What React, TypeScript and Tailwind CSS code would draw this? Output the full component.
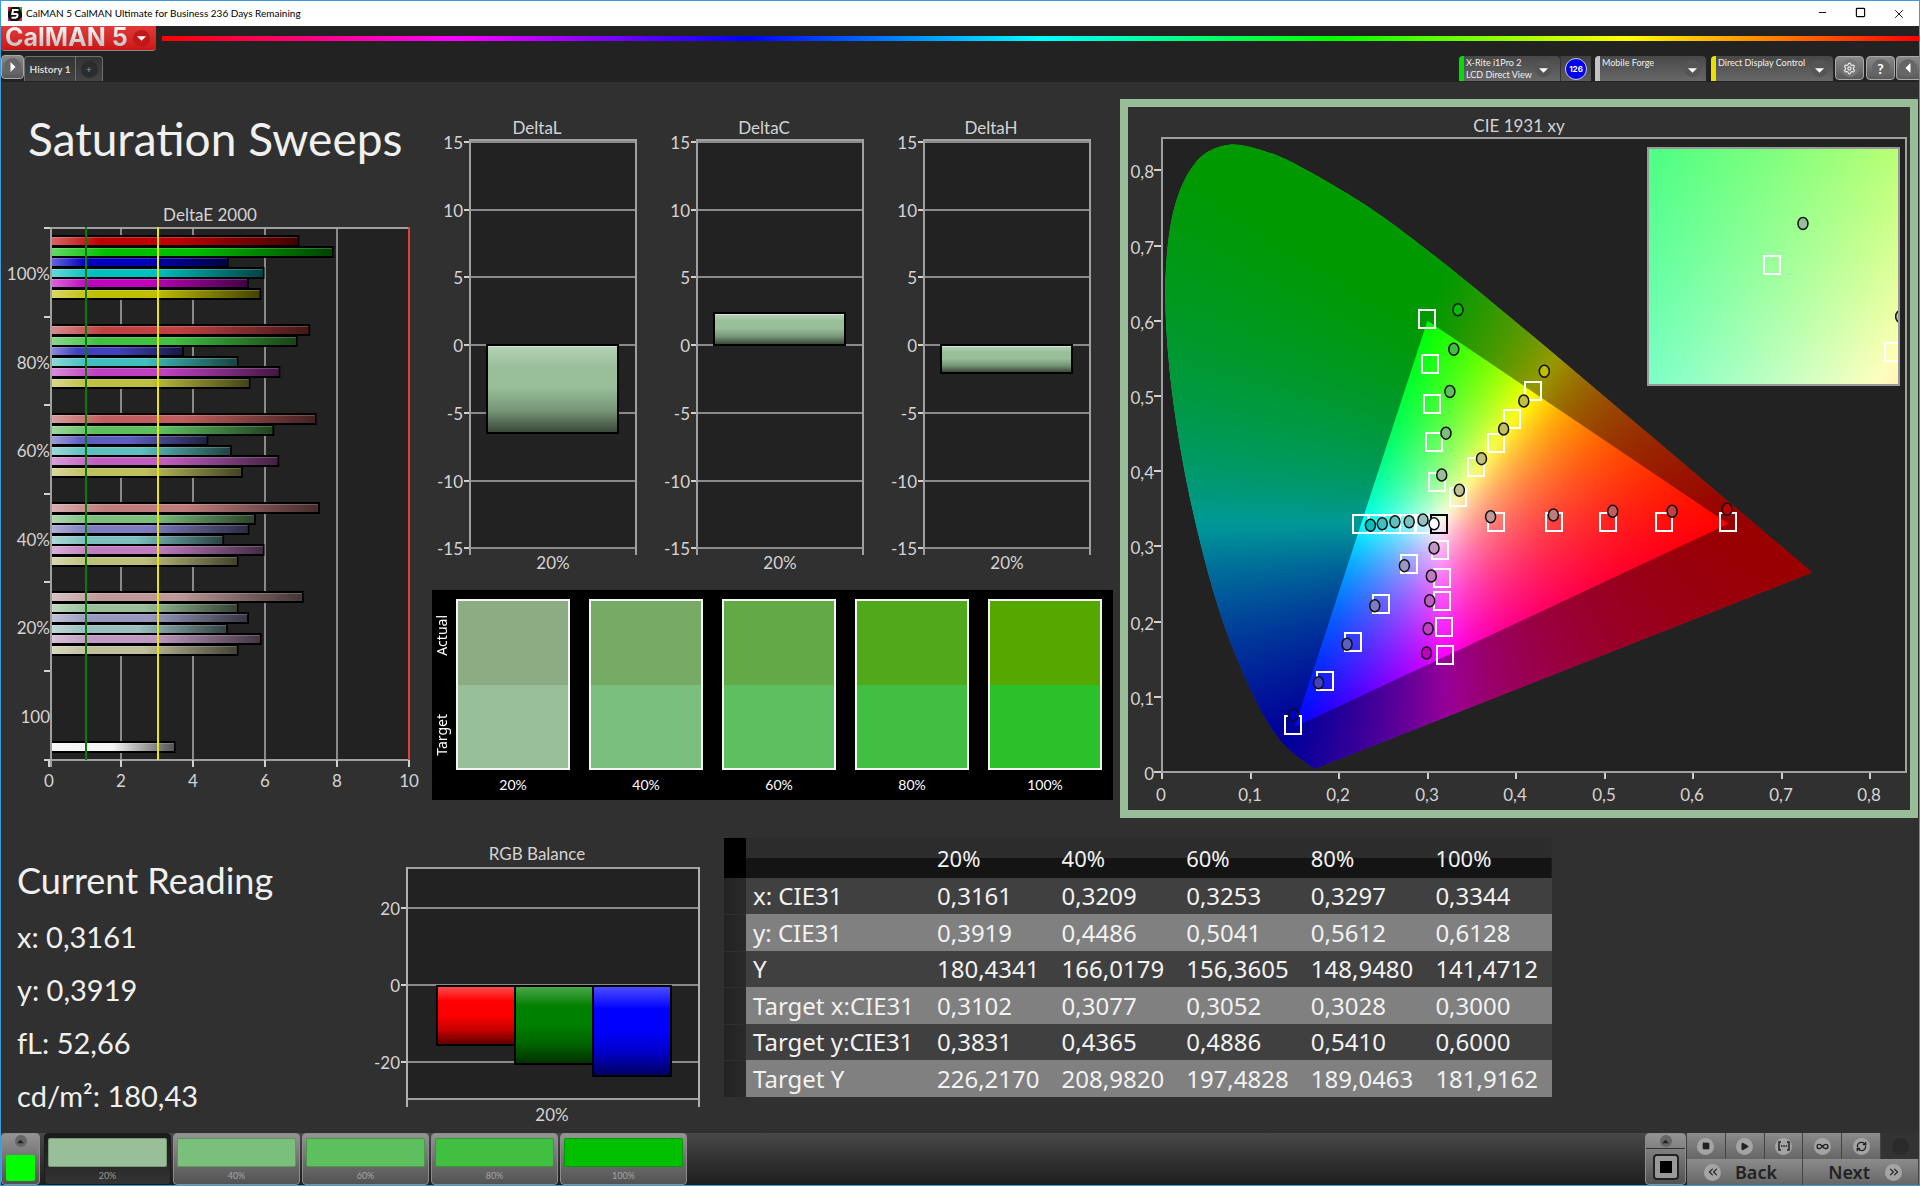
import type { ReactNode } from 'react';
import {
  ChevronsLeft,
  ChevronsRight,
  Infinity as InfinityIcon,
  Minus,
  Play,
  RefreshCw,
  Settings,
  Square,
  X,
} from 'lucide-react';

type Point = [number, number];
type Rgb = [number, number, number];

const levels = ['20%', '40%', '60%', '80%', '100%'];
const targetColors = ['#98bf98', '#7abf7a', '#5ebf5e', '#41bf41', '#00c000'];

// channel value left in the "off" channels, from 100% to 20% saturation
const desaturation = [0, 65, 94, 124, 153];

const hues: Record<string, Rgb> = {
  red: [1, 0, 0],
  green: [0, 1, 0],
  blue: [0, 0, 1],
  cyan: [0, 1, 1],
  magenta: [1, 0, 1],
  yellow: [1, 1, 0],
};

function hueColor(hue: string, step: number) {
  const [r, g, b] = hues[hue].map((on) => (on ? 191 : desaturation[step]));
  return `rgb(${r},${g},${b})`;
}

/* ---------- shared chart pieces ---------- */

interface LabelProps {
  x: number;
  y: number;
  anchor?: 'start' | 'middle' | 'end';
  children: ReactNode;
}

function Label({ x, y, anchor = 'middle', children }: LabelProps) {
  return (
    <text x={x} y={y + 7} textAnchor={anchor} className="fill-[#d4d4d4] text-[17px]">
      {children}
    </text>
  );
}

function BarShades() {
  return (
    <defs>
      <linearGradient id="shadeRight">
        <stop offset="0" stopColor="#fff" stopOpacity="0.4" />
        <stop offset="0.2" stopColor="#fff" stopOpacity="0" />
        <stop offset="0.5" stopColor="#000" stopOpacity="0" />
        <stop offset="1" stopColor="#000" stopOpacity="0.65" />
      </linearGradient>
      <linearGradient id="shadeDown" x2="0" y2="1">
        <stop offset="0" stopColor="#fff" stopOpacity="0.3" />
        <stop offset="0.25" stopColor="#fff" stopOpacity="0" />
        <stop offset="0.48" stopColor="#000" stopOpacity="0" />
        <stop offset="0.75" stopColor="#000" stopOpacity="0.22" />
        <stop offset="1" stopColor="#000" stopOpacity="0.62" />
      </linearGradient>
    </defs>
  );
}

/* ---------- DeltaE 2000 ---------- */

const barOrder = ['red', 'green', 'blue', 'cyan', 'magenta', 'yellow'];

const deltaE = [
  { label: '100%', values: [6.9, 7.85, 4.94, 5.93, 5.5, 5.84] },
  { label: '80%', values: [7.2, 6.85, 3.69, 5.21, 6.37, 5.54] },
  { label: '60%', values: [7.38, 6.2, 4.37, 5.02, 6.34, 5.33] },
  { label: '40%', values: [7.47, 5.69, 5.51, 4.81, 5.93, 5.21] },
  { label: '20%', values: [7.02, 5.21, 5.5, 4.91, 5.85, 5.21] },
];

function HorizontalBar({ y, value, color }: { y: number; value: number; color: string }) {
  const width = value * 36;
  return (
    <g>
      <rect x={50} y={y - 6} width={width} height={12} fill="#000" />
      <rect x={50} y={y - 4} width={width - 2} height={8} fill={color} />
      <rect x={50} y={y - 4} width={width - 2} height={8} fill="url(#shadeRight)" />
      <rect x={50} y={y - 4} width={width - 2} height={1} fill="#fff" opacity={0.2} />
    </g>
  );
}

function DeltaEChart() {
  return (
    <svg viewBox="0 0 431 615" className="block w-full" role="img" aria-label="DeltaE 2000">
      <Label x={209} y={15}>DeltaE 2000</Label>
      <rect x={50} y={29} width={358} height={531} fill="#222" />
      {[2, 4, 6, 8].map((v) => (
        <rect key={v} x={48 + v * 36 - 1} y={29} width={2} height={532} fill="#8a8a8a" />
      ))}
      {deltaE.map((group, g) =>
        group.values.map((value, i) => (
          <HorizontalBar
            key={`${group.label}-${i}`}
            y={Math.round(42 + g * 89 + i * 10.6)}
            value={value}
            color={hueColor(barOrder[i], g)}
          />
        )),
      )}
      <HorizontalBar y={548} value={3.46} color="#f4f4f4" />
      <rect x={49} y={28} width={359} height={2} fill="#a0a0a0" />
      <rect x={49} y={28} width={2} height={540} fill="#a0a0a0" />
      <rect x={49} y={560} width={359} height={2} fill="#a0a0a0" />
      <rect x={407} y={28} width={2} height={533} fill="#e04040" />
      <rect x={84} y={28} width={2} height={533} fill="#0a7a0a" />
      <rect x={156} y={28} width={2} height={533} fill="#e8e800" />
      {[0, 1, 2, 3, 4, 5, 6].map((i) => (
        <rect key={i} x={43} y={Math.round(28 + i * 88.6)} width={6} height={2} fill="#d0d0d0" />
      ))}
      {[0, 2, 4, 6, 8, 10].map((v) => (
        <g key={v}>
          <rect x={47 + v * 36} y={561} width={2} height={7} fill="#d0d0d0" />
          <Label x={48 + v * 36} y={581}>{v}</Label>
        </g>
      ))}
      {deltaE.map((group, g) => (
        <Label key={group.label} x={49} y={Math.round(74 + g * 88.6)} anchor="end">{group.label}</Label>
      ))}
      <Label x={49} y={517} anchor="end">100</Label>
    </svg>
  );
}

/* ---------- DeltaL / DeltaC / DeltaH ---------- */

function DeltaChart({ title, top, height }: { title: string; top: number; height: number }) {
  return (
    <svg viewBox="0 0 227 508" className="block w-full min-w-0" role="img" aria-label={title}>
      <Label x={105} y={45}>{title}</Label>
      <rect x={38} y={58} width={166} height={408} fill="#222" />
      {[15, 10, 5, 0, -5, -10, -15].map((v) => {
        const y = Math.round(263 - v * 13.55);
        return (
          <g key={v}>
            <rect x={32} y={y - 1} width={6} height={2} fill="#d0d0d0" />
            <rect x={38} y={y - 1} width={166} height={2} fill="#8a8a8a" />
            <Label x={31} y={y} anchor="end">{v}</Label>
          </g>
        );
      })}
      <rect x={38} y={57} width={166} height={2} fill="#a0a0a0" />
      <rect x={37} y={57} width={2} height={416} fill="#a0a0a0" />
      <rect x={203} y={57} width={2} height={416} fill="#a0a0a0" />
      <rect x={55} y={top} width={131} height={height} fill="#98bf98" stroke="#000" strokeWidth={2} />
      <rect x={56} y={top + 1} width={129} height={height - 2} fill="url(#shadeDown)" />
      <rect x={56} y={top + 1} width={129} height={1} fill="#fff" opacity={0.4} />
      <Label x={121} y={480}>20%</Label>
    </svg>
  );
}

/* ---------- Actual / Target swatches ---------- */

const swatches = [
  { actual: '#8cac84', target: '#98bf98' },
  { actual: '#77aa65', target: '#7abf7d' },
  { actual: '#62aa45', target: '#5ebf60' },
  { actual: '#50a91a', target: '#41bf42' },
  { actual: '#54a800', target: '#2ac12a' },
];

function SwatchPanel() {
  return (
    <div className="flex bg-black pt-[9px] pr-[11px] text-white">
      <div className="flex h-[171px] w-6 flex-col items-start justify-between pt-4 pr-1 pb-[14px] font-['Noto_Sans'] text-[14px] leading-5">
        <span className="rotate-180 [writing-mode:vertical-rl]">Actual</span>
        <span className="rotate-180 [writing-mode:vertical-rl]">Target</span>
      </div>
      <ul className="grid grow grid-cols-5 gap-[19px]">
        {swatches.map((s, i) => (
          <li key={levels[i]} className="text-center text-[14px] leading-[30px]">
            <div className="flex h-[171px] flex-col border-2 border-[#f4f4f4]">
              <div className="flex-1" style={{ backgroundColor: s.actual }} />
              <div className="flex-1" style={{ backgroundColor: s.target }} />
            </div>
            {levels[i]}
          </li>
        ))}
      </ul>
    </div>
  );
}

/* ---------- CIE 1931 xy ---------- */

const locus: Point[] = [
  [0.1741, 0.005], [0.1714, 0.0051], [0.1644, 0.0109], [0.1566, 0.0177], [0.144, 0.0297],
  [0.1355, 0.0399], [0.1241, 0.0578], [0.1096, 0.0868], [0.0913, 0.1327], [0.0687, 0.2007],
  [0.0454, 0.295], [0.0235, 0.4127], [0.0082, 0.5384], [0.0039, 0.6548], [0.0139, 0.7502],
  [0.0389, 0.812], [0.0743, 0.8338], [0.1142, 0.8262], [0.1547, 0.8059], [0.2296, 0.7543],
  [0.3016, 0.6923], [0.3731, 0.6245], [0.4441, 0.5547], [0.5125, 0.4866], [0.5752, 0.4242],
  [0.627, 0.3725], [0.6915, 0.3083], [0.7347, 0.2653],
];

const primaries: Point[] = [[0.64, 0.33], [0.3, 0.6], [0.15, 0.06]];

const targets: Point[] = [
  [0.299, 0.602], [0.3028, 0.543], [0.3052, 0.49], [0.3077, 0.439], [0.3102, 0.385],
  [0.4193, 0.5063], [0.396, 0.47], [0.377, 0.438], [0.355, 0.405], [0.334, 0.366],
  [0.64, 0.332], [0.567, 0.332], [0.504, 0.332], [0.443, 0.332], [0.377, 0.332],
  [0.2245, 0.33], [0.2418, 0.33], [0.2595, 0.33], [0.2776, 0.33], [0.2946, 0.33],
  [0.3199, 0.156], [0.3181, 0.1928], [0.3164, 0.2278], [0.3164, 0.258], [0.3146, 0.2957],
  [0.1484, 0.063], [0.184, 0.121], [0.2163, 0.1724], [0.248, 0.223], [0.2788, 0.277],
];

const measured: Record<string, Point[]> = {
  green: [[0.3344, 0.6148], [0.3297, 0.5622], [0.3253, 0.5061], [0.3209, 0.4506], [0.3161, 0.3949]],
  yellow: [[0.432, 0.5328], [0.4088, 0.4933], [0.386, 0.4561], [0.361, 0.4167], [0.336, 0.3746]],
  red: [[0.6385, 0.3493], [0.5764, 0.3466], [0.5093, 0.3466], [0.4423, 0.3418], [0.3713, 0.3395]],
  cyan: [[0.2355, 0.328], [0.2489, 0.3302], [0.2632, 0.3329], [0.2793, 0.3329], [0.2949, 0.3351]],
  magenta: [[0.2989, 0.1582], [0.3007, 0.1906], [0.3025, 0.2278], [0.3043, 0.2606], [0.3074, 0.2979]],
  blue: [[0.1484, 0.0762], [0.1769, 0.1188], [0.2091, 0.1698], [0.2404, 0.2212], [0.2739, 0.2744]],
};

const toX = (x: number) => 34 + x * 885;
const toY = (y: number) => 665 - y * 752;

// linear sRGB mix with the given chromaticity, scaled so the largest channel is full
function chromaticityColor(x: number, y: number) {
  const safeY = Math.max(y, 0.004);
  const bigX = x / safeY;
  const bigZ = (1 - x - safeY) / safeY;
  const linear = [
    3.2406 * bigX - 1.5372 - 0.4986 * bigZ,
    -0.9689 * bigX + 1.8758 + 0.0415 * bigZ,
    0.0557 * bigX - 0.204 + 1.057 * bigZ,
  ].map((c) => Math.max(c, 0));
  const peak = Math.max(...linear, 0.0001);
  return `rgb(${linear.map((c) => Math.round((255 * c) / peak)).join(',')})`;
}

function smoothPath(points: Point[]) {
  const p = points.map(([x, y]): Point => [toX(x), toY(y)]);
  let d = `M${p[0][0]} ${p[0][1]}`;
  for (let i = 0; i < p.length - 1; i++) {
    const before = p[Math.max(i - 1, 0)];
    const after = p[Math.min(i + 2, p.length - 1)];
    const [a, b] = [p[i], p[i + 1]];
    d += `C${a[0] + (b[0] - before[0]) / 6} ${a[1] + (b[1] - before[1]) / 6} `;
    d += `${b[0] - (after[0] - a[0]) / 6} ${b[1] - (after[1] - a[1]) / 6} ${b[0]} ${b[1]}`;
  }
  return `${d}Z`;
}

const locusPath = smoothPath(locus);
const gamutPath = `M${primaries.map(([x, y]) => `${toX(x)} ${toY(y)}`).join('L')}Z`;

function ColorField({ size }: { size: number }) {
  const cells = [];
  for (let py = 26; py < 680; py += size) {
    for (let px = 26; px < 700; px += size) {
      const x = (px + size / 2 - 34) / 885;
      const y = (665 - py - size / 2) / 752;
      // skip the empty corner right of the locus and the one below the purple line
      if (x + y > 1.04 || y < 0.42 * x - 0.1) continue;
      cells.push(
        <rect key={`${px}-${py}`} x={px} y={py} width={size + 1} height={size + 1} fill={chromaticityColor(x, y)} />,
      );
    }
  }
  return <g filter="url(#soften)">{cells}</g>;
}

const inset = { x: 520, y: 41, width: 251, height: 237 };
const insetX = (x: number) => 644 + (x - 0.3102) * 5250;
const insetY = (y: number) => 158 - (y - 0.3831) * 4716;

function Inset() {
  const cells = [];
  for (let py = inset.y - 12; py < inset.y + inset.height + 12; py += 12) {
    for (let px = inset.x - 12; px < inset.x + inset.width + 12; px += 12) {
      const x = 0.3102 + (px + 6 - 644) / 5250;
      const y = 0.3831 - (py + 6 - 158) / 4716;
      cells.push(
        <rect key={`${px}-${py}`} x={px} y={py} width={13} height={13} fill={chromaticityColor(x, y)} />,
      );
    }
  }
  return (
    <g>
      <g clipPath="url(#insetClip)">
        <g filter="url(#soften)">{cells}</g>
        <TargetMark cx={insetX(0.3102)} cy={insetY(0.3831)} />
        <TargetMark cx={insetX(0.3333)} cy={insetY(0.3646)} />
        <MeasuredMark cx={insetX(0.3161)} cy={insetY(0.3919)} color="#98bf98" />
        <MeasuredMark cx={insetX(0.3347)} cy={insetY(0.3722)} color="#bfbf98" />
      </g>
      <rect {...inset} fill="none" stroke="#999" strokeWidth={2} />
    </g>
  );
}

function TargetMark({ cx, cy, color = '#fff' }: { cx: number; cy: number; color?: string }) {
  return (
    <rect
      x={Math.round(cx - 8)}
      y={Math.round(cy - 9)}
      width={16}
      height={18}
      fill="none"
      stroke={color}
      strokeWidth={2}
    />
  );
}

function MeasuredMark({ cx, cy, color }: { cx: number; cy: number; color: string }) {
  return <ellipse cx={cx} cy={cy} rx={5} ry={6} fill={color} stroke="#111" strokeWidth={1.5} />;
}

function CieChart() {
  return (
    <div className="border-8 border-[#98bd98]">
      <svg viewBox="0 0 782 703" className="block w-full" role="img" aria-label="CIE 1931 xy">
        <defs>
          <filter id="soften" x="0" y="0" width="1" height="1" colorInterpolationFilters="sRGB">
            <feGaussianBlur stdDeviation="5" />
          </filter>
          <clipPath id="locusClip"><path d={locusPath} /></clipPath>
          <clipPath id="insetClip"><rect {...inset} /></clipPath>
        </defs>
        <Label x={391} y={18}>CIE 1931 xy</Label>
        <rect x={34} y={31} width={744} height={634} fill="#222" stroke="#a0a0a0" strokeWidth={2} />
        <g clipPath="url(#locusClip)">
          <ColorField size={8} />
          <path d={`${locusPath}${gamutPath}`} fillRule="evenodd" opacity={0.4} />
        </g>
        {[0, 1, 2, 3, 4, 5, 6, 7, 8].map((i) => {
          const text = i === 0 ? '0' : `0,${i}`;
          const x = Math.round(toX(i / 10));
          const y = Math.round(toY(i / 10));
          return (
            <g key={i}>
              <rect x={26} y={y - 1} width={7} height={2} fill="#d0d0d0" />
              <Label x={26} y={y + 1} anchor="end">{text}</Label>
              <rect x={x - 1} y={666} width={2} height={6} fill="#d0d0d0" />
              <Label x={x - 1} y={687}>{text}</Label>
            </g>
          );
        })}
        {targets.map(([x, y]) => (
          <TargetMark key={`${x}-${y}`} cx={toX(x)} cy={toY(y)} />
        ))}
        <TargetMark cx={toX(0.3127)} cy={toY(0.33)} color="#000" />
        {Object.entries(measured).map(([hue, points]) =>
          points.map(([x, y], i) => (
            <MeasuredMark key={`${hue}-${i}`} cx={toX(x)} cy={toY(y)} color={hueColor(hue, i)} />
          )),
        )}
        <MeasuredMark cx={toX(0.3074)} cy={toY(0.3302)} color="#fff" />
        <Inset />
      </svg>
    </div>
  );
}

/* ---------- RGB balance ---------- */

const balance = [
  { color: '#ff0000', bottom: 225 },
  { color: '#008000', bottom: 244 },
  { color: '#0000ff', bottom: 256 },
];

function RgbBalance() {
  return (
    <svg viewBox="0 0 340 313" className="block w-full" role="img" aria-label="RGB Balance">
      <Label x={167} y={34}>RGB Balance</Label>
      <rect x={37} y={49} width={292} height={231} fill="#222" />
      {[20, 0, -20].map((v) => {
        const y = Math.round(166 - v * 3.85);
        return (
          <g key={v}>
            <rect x={31} y={y - 1} width={6} height={2} fill="#d0d0d0" />
            <rect x={37} y={y - 1} width={292} height={2} fill="#8a8a8a" />
            <Label x={30} y={y} anchor="end">{v}</Label>
          </g>
        );
      })}
      <rect x={37} y={48} width={292} height={2} fill="#a0a0a0" />
      <rect x={37} y={279} width={292} height={2} fill="#a0a0a0" />
      <rect x={36} y={48} width={2} height={240} fill="#b0b0b0" />
      <rect x={328} y={48} width={2} height={240} fill="#b0b0b0" />
      {balance.map((b, i) => (
        <g key={b.color}>
          <rect x={67 + i * 78} y={167} width={78} height={b.bottom - 167 + 1} fill={b.color} stroke="#000" strokeWidth={2} />
          <rect x={68 + i * 78} y={168} width={76} height={b.bottom - 167 - 1} fill="url(#shadeDown)" />
        </g>
      ))}
      <Label x={182} y={295}>20%</Label>
    </svg>
  );
}

/* ---------- readings ---------- */

const readings = ['x: 0,3161', 'y: 0,3919', 'fL: 52,66', 'cd/m²: 180,43'];

function CurrentReading() {
  return (
    <section className="pt-[35px] pl-4 text-[29px] leading-[53px] text-[#f0f0f0]">
      <h2 className="text-[36px]">Current Reading</h2>
      <div className="pt-[3px]">
        {readings.map((r) => (
          <p key={r}>{r}</p>
        ))}
      </div>
    </section>
  );
}

const rows = [
  { name: 'x: CIE31', values: ['0,3161', '0,3209', '0,3253', '0,3297', '0,3344'] },
  { name: 'y: CIE31', values: ['0,3919', '0,4486', '0,5041', '0,5612', '0,6128'] },
  { name: 'Y', values: ['180,4341', '166,0179', '156,3605', '148,9480', '141,4712'] },
  { name: 'Target x:CIE31', values: ['0,3102', '0,3077', '0,3052', '0,3028', '0,3000'] },
  { name: 'Target y:CIE31', values: ['0,3831', '0,4365', '0,4886', '0,5410', '0,6000'] },
  { name: 'Target Y', values: ['226,2170', '208,9820', '197,4828', '189,0463', '181,9162'] },
];

function ReadingsTable() {
  return (
    <table className="mt-[19px] w-[828px] table-fixed border-collapse text-left font-['Noto_Sans'] text-[24px] leading-8 text-[#f2f2f2]">
      <colgroup>
        <col className="w-[22px]" />
        <col className="w-[183px]" />
      </colgroup>
      <thead>
        <tr className="h-10 bg-linear-to-b from-[#2c2c2c] from-50% to-[#141414] to-50% text-[22px]">
          <td className="bg-black" />
          <td />
          {levels.map((l) => (
            <th key={l} scope="col" className="pl-2 font-normal">{l}</th>
          ))}
        </tr>
      </thead>
      <tbody>
        {rows.map((row) => (
          <tr key={row.name} className="h-9 bg-[#404040] even:h-[37px] even:bg-[#808080]">
            <td className="border-b border-[#303030] bg-linear-to-r from-[#222] to-[#2a2a2a]" />
            <th scope="row" className="pl-[7px] font-normal whitespace-nowrap">{row.name}</th>
            {row.values.map((v) => (
              <td key={v} className="pl-2">{v}</td>
            ))}
          </tr>
        ))}
      </tbody>
    </table>
  );
}

/* ---------- window chrome ---------- */

function TitleBar() {
  return (
    <div className="flex h-[25px] items-center bg-white pl-[7px] text-black">
      <svg viewBox="0 0 14 14" className="size-[14px]" aria-hidden="true">
        <rect width="14" height="14" fill="#111" />
        <path d="M0 0h4L0 5z" fill="#c22" />
        <path d="M14 0v6l-3-6z" fill="#2a2" />
        <path d="M0 14v-4l3 4z" fill="#a2a" />
        <path d="M14 14h-4l4-4z" fill="#d33" />
        <path d="M10.500 3H5L4.300 7h4q1.400 0 1.200 1.700T7.500 10.700H3.500" fill="none" stroke="#fff" strokeWidth="2" />
      </svg>
      <span className="ml-1 text-[10px]">CalMAN 5 CalMAN Ultimate for Business 236 Days Remaining</span>
      <div className="ml-auto flex">
        <button type="button" aria-label="Minimize" className="flex w-[38px] justify-center"><Minus size={11} strokeWidth={2} /></button>
        <button type="button" aria-label="Maximize" className="flex w-[38px] justify-center"><Square size={11} strokeWidth={2.5} /></button>
        <button type="button" aria-label="Close" className="flex w-[40px] justify-center"><X size={14} strokeWidth={1.5} /></button>
      </div>
    </div>
  );
}

function Triangle({ className }: { className: string }) {
  return (
    <svg viewBox="0 0 8 8" className={className} aria-hidden="true">
      <path d="M0 2h8L4 6z" fill="currentColor" />
    </svg>
  );
}

function Knob({ children, className = 'size-[17px] bg-[#555]' }: { children?: ReactNode; className?: string }) {
  return <span className={`flex shrink-0 items-center justify-center rounded-full ${className}`}>{children}</span>;
}

function DeviceButton({ color, width, lines }: { color: string; width: string; lines: string[] }) {
  return (
    <button
      type="button"
      className={`flex h-[25px] items-center rounded-t-sm bg-linear-to-b from-[#484848] to-[#686868] text-left text-[9px] leading-3 text-[#f0f0f0] ${width}`}
    >
      <span className={`h-full w-[5px] shrink-0 rounded-tl-sm ${color}`} />
      <span className="ml-[2px] w-0 grow self-start pt-px whitespace-nowrap">
        {lines.map((l) => (
          <span key={l} className="block">{l}</span>
        ))}
      </span>
      <Knob><Triangle className="mt-1 size-[9px] text-white" /></Knob>
    </button>
  );
}

const squareButton =
  'flex h-[24px] items-center justify-center rounded-sm border border-[#a8a8a8] bg-linear-to-b from-[#8a8a8a] to-[#5a5a5a] text-white';

function Header() {
  return (
    <header className="bg-[#222]">
      <div className="flex h-[26px] items-start">
        <button
          type="button"
          className="flex h-[25px] w-[155px] items-center rounded-b-sm border-b border-[#888] bg-linear-to-b from-[#e03a3a] to-[#cc1414] pl-1"
        >
          <span className="mb-[3px] bg-linear-to-b from-white to-[#b8b8b8] bg-clip-text font-[Inter] text-[25px] leading-6 font-bold whitespace-nowrap text-transparent">
            CalMAN 5
          </span>
          <Knob className="ml-auto mr-[6px] size-[17px] bg-[#c01818]"><Triangle className="size-[9px] text-white" /></Knob>
        </button>
        <div className="mt-[10px] ml-[6px] h-[5px] grow bg-[linear-gradient(to_right,#f00,#f0f,#00f,#0ff,#0f0,#ff0,#f00)]" />
      </div>
      <div className="flex h-[30px] items-end pb-px">
        <button type="button" aria-label="Run" className={`w-[23px] self-center ${squareButton}`}>
          <Knob className="size-[17px] bg-[#666]"><Triangle className="size-[10px] -rotate-90" /></Knob>
        </button>
        <div className="flex h-[25px] rounded-t-sm border border-b-0 border-[#707070] bg-linear-to-b from-[#333] to-[#444] text-[10px] text-[#d8d8d8]">
          <button type="button" className="w-[50px] font-bold whitespace-nowrap">History 1</button>
          <button type="button" aria-label="Add tab" className="flex w-[27px] items-center justify-center border-l border-[#707070]">
            <Knob className="size-[17px] bg-[#2c2c2c] text-[#999]">+</Knob>
          </button>
        </div>
        <div className="ml-auto flex items-end">
          <DeviceButton color="bg-[#00e000]" width="w-[101px] pr-2" lines={['X-Rite i1Pro 2', 'LCD Direct View']} />
          <span className="mr-1 flex h-[25px] w-[31px] items-center justify-center border-l border-[#333] bg-linear-to-b from-[#404040] to-[#5c5c5c]">
            <span className="flex size-[22px] items-center justify-center rounded-full border border-[#ccd] bg-[#0000f0] font-[Inter] text-[8px] font-bold text-white">
              126
            </span>
          </span>
          <DeviceButton color="bg-[#c4c4c4]" width="w-[111px] pr-[5px]" lines={['Mobile Forge']} />
          <span className="w-[5px]" />
          <DeviceButton color="bg-[#e8e000]" width="w-[122px] pr-[5px]" lines={['Direct Display Control']} />
          <button type="button" aria-label="Settings" className={`mb-px ml-[2px] w-[29px] ${squareButton}`}>
            <Knob className="size-[18px] bg-[#777]"><Settings size={13} color="#eee" /></Knob>
          </button>
          <button type="button" aria-label="Help" className={`mb-px ml-[2px] w-[29px] ${squareButton}`}>
            <Knob className="size-[18px] bg-[#666] text-[14px] font-bold">?</Knob>
          </button>
          <button type="button" aria-label="Collapse" className={`mb-px ml-[1px] w-[23px] rounded-r-none border-r-0 ${squareButton}`}>
            <Knob className="size-[18px] bg-[#666]"><Triangle className="size-[10px] rotate-90" /></Knob>
          </button>
        </div>
      </div>
    </header>
  );
}

/* ---------- bottom toolbar ---------- */

const panelButton = 'rounded-sm border border-[#8c8c8c] bg-linear-to-b from-[#949494] to-[#525252]';
const toolButton =
  'flex h-[26px] items-center border-r border-[#444] bg-linear-to-b from-[#8c8c8c] to-[#666] text-[#222]';

function RangeIcon() {
  return (
    <svg viewBox="0 0 12 10" className="h-[10px] w-3" fill="none" stroke="currentColor" strokeWidth="1.500" aria-hidden="true">
      <path d="M3 1H1v8h2M9 1h2v8H9M3 5h1.500M5.300 5h1.500M7.600 5h1.500" />
    </svg>
  );
}

function Toolbar() {
  const tools = [
    { name: 'Stop', icon: <Square size={8} fill="currentColor" /> },
    { name: 'Play', icon: <Play size={9} fill="currentColor" /> },
    { name: 'Range', icon: <RangeIcon /> },
    { name: 'Continuous', icon: <InfinityIcon size={13} strokeWidth={2.5} /> },
    { name: 'Refresh', icon: <RefreshCw size={11} strokeWidth={3} /> },
  ];
  return (
    <footer className="flex h-[52px] bg-linear-to-b from-[#484848] to-[#1e1e1e]">
      <button type="button" aria-label="Current color" className={`flex w-[39px] flex-col items-center justify-between pt-px pb-[3px] ${panelButton}`}>
        <Knob className="size-3 bg-[#666]"><Triangle className="size-[7px] rotate-180 text-[#222]" /></Knob>
        <span className="h-[26px] w-[29px] rounded-xs bg-[#00ff00]" />
      </button>
      <div className="ml-1 flex gap-[2px]">
        {levels.map((level, i) => (
          <button
            key={level}
            type="button"
            className={`flex w-[127px] flex-col px-[3px] pt-1 text-center text-[9px] leading-[17px] ${
              i === 0 ? 'rounded-sm border border-[#1a1a1a] bg-linear-to-b from-[#1a1a1a] to-[#333] text-[#9a9a9a]' : `text-[#a4a4a4] ${panelButton}`
            }`}
          >
            <span className="h-[31px] w-full rounded-xs border border-black/20" style={{ backgroundColor: targetColors[i] }} />
            <span className="w-full">{level}</span>
          </button>
        ))}
      </div>
      <div className="ml-auto flex">
        <button type="button" aria-label="Stop all" className={`flex w-[41px] flex-col items-center ${panelButton}`}>
          <span className="flex h-[15px] w-full items-center justify-center border-b border-[#333]">
            <Knob className="size-3 bg-[#666]"><Triangle className="size-[7px] rotate-180 text-[#222]" /></Knob>
          </span>
          <span className="mt-[5px] flex size-[26px] items-center justify-center rounded-sm border-2 border-[#222] bg-[#999]">
            <span className="size-3 bg-black" />
          </span>
        </button>
        <div className="ml-px flex w-[232px] flex-col">
          <div className="flex">
            {tools.map((tool) => (
              <button key={tool.name} type="button" aria-label={tool.name} className={`grow basis-0 justify-center ${toolButton}`}>
                <Knob className="size-[17px] bg-[#a4a4a4]">{tool.icon}</Knob>
              </button>
            ))}
            <span className="flex h-[26px] grow basis-0 items-center justify-center bg-[#333]">
              <Knob className="size-[17px] bg-[#2a2a2a]" />
            </span>
          </div>
          <div className="flex font-['Noto_Sans'] text-[18px] font-semibold text-[#2c2c2c]">
            <button type="button" className={`w-1/2 gap-[14px] pl-[17px] ${toolButton}`}>
              <Knob className="size-[17px] bg-[#a4a4a4]"><ChevronsLeft size={14} /></Knob>
              Back
            </button>
            <button type="button" className={`w-1/2 justify-end gap-[15px] pr-4 ${toolButton}`}>
              Next
              <Knob className="size-[17px] bg-[#a4a4a4]"><ChevronsRight size={14} /></Knob>
            </button>
          </div>
        </div>
      </div>
    </footer>
  );
}

export default function App() {
  return (
    <div className="flex min-h-screen flex-col border border-[#3f9bd8] bg-[#303030] font-[Lato,'Noto_Sans',sans-serif]">
      <TitleBar />
      <Header />
      <main className="grow">
        <svg className="absolute size-0" aria-hidden="true"><BarShades /></svg>
        <div className="grid grid-cols-[431fr_681fr_806fr]">
          <section className="min-w-0">
            <h1 className="pt-[25px] pb-7 pl-[27px] text-[46px] leading-[64px] whitespace-nowrap text-[#f0f0f0]">Saturation Sweeps</h1>
            <DeltaEChart />
          </section>
          <section className="min-w-0">
            <div className="grid grid-cols-3">
              <DeltaChart title="DeltaL" top={263} height={88} />
              <DeltaChart title="DeltaC" top={231} height={32} />
              <DeltaChart title="DeltaH" top={263} height={28} />
            </div>
            <SwatchPanel />
          </section>
          <section className="min-w-0 pt-[17px] pr-px pl-[7px]">
            <CieChart />
          </section>
        </div>
        <div className="grid grid-cols-[369fr_340fr_1209fr] pt-px">
          <CurrentReading />
          <RgbBalance />
          <div className="pl-[14px]">
            <ReadingsTable />
          </div>
        </div>
      </main>
      <Toolbar />
    </div>
  );
}
